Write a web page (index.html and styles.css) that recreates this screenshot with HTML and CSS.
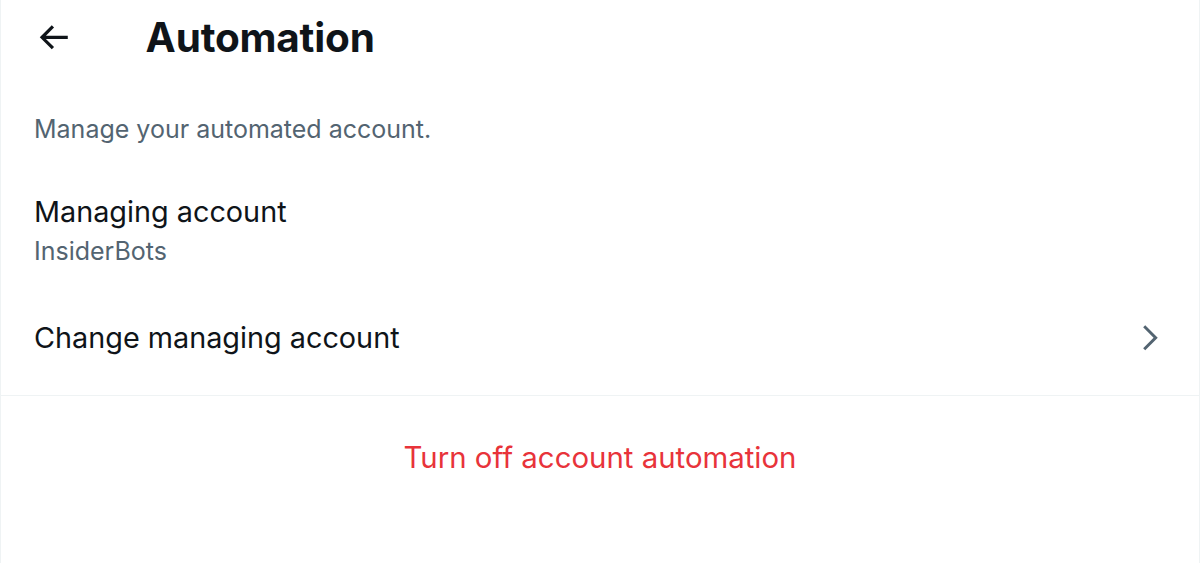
FILE: index.html
```html
<!DOCTYPE html>
<html>
<head>
<meta charset="utf-8">
<link rel="stylesheet" href="styles.css">
</head>
<body>
<div class="page">
  <header class="header">
    <svg class="back" viewBox="0 0 24 24"><path d="M7.414 13l5.043 5.04-1.414 1.42L3.586 12l7.457-7.46 1.414 1.42L7.414 11H21v2H7.414z" fill="#0f1419"/></svg>
    <h1 class="title">Automation</h1>
  </header>
  <p class="subtitle">Manage your automated account.</p>
  <div class="info">
    <div class="info-label">Managing account</div>
    <div class="info-value">InsiderBots</div>
  </div>
  <div class="row">
    <span class="row-label">Change managing account</span>
    <svg class="chev" viewBox="0 0 24 24"><path d="M14.586 12L7.543 4.96l1.414-1.42L17.414 12l-8.457 8.46-1.414-1.42L14.586 12z" fill="#536471"/></svg>
  </div>
  <div class="danger">Turn off account automation</div>
</div>
</body>
</html>
```

FILE: styles.css
```css
html, body {
  margin: 0;
  padding: 0;
  background: #fff;
}
body {
  font-family: Inter, "Noto Sans", sans-serif;
  color: #0f1419;
}
.page {
  width: 1198px;
  height: 563px;
  border-left: 1px solid #eff3f4;
  border-right: 1px solid #eff3f4;
}
.header {
  height: 75px;
  display: flex;
  align-items: center;
  padding-left: 33px;
}
.back {
  width: 38.6px;
  height: 38.6px;
  margin-right: 73px;
  flex-shrink: 0;
}
.title {
  margin: 0;
  font-size: 40.5px;
  line-height: 48px;
  font-weight: 700;
  letter-spacing: -0.2px;
}
.subtitle {
  margin: 0;
  padding: 39px 33px 19px;
  font-size: 25px;
  color: #536471;
  line-height: 30px;
}
.info {
  padding: 31px 33px 32px;
}
.info-label {
  font-size: 28.8px;
  line-height: 36px;
}
.info-value {
  margin-top: 4px;
  font-size: 25px;
  line-height: 34px;
  color: #536471;
}
.row {
  display: flex;
  align-items: center;
  justify-content: space-between;
  padding: 20px 32px 39px 33px;
  border-bottom: 1px solid #eff3f4;
}
.row-label {
  font-size: 28.8px;
  line-height: 36px;
}
.chev {
  width: 35.5px;
  height: 35.5px;
}
.danger {
  text-align: center;
  color: #e8333a;
  font-size: 29.4px;
  line-height: 36px;
  padding-top: 44px;
}
```
